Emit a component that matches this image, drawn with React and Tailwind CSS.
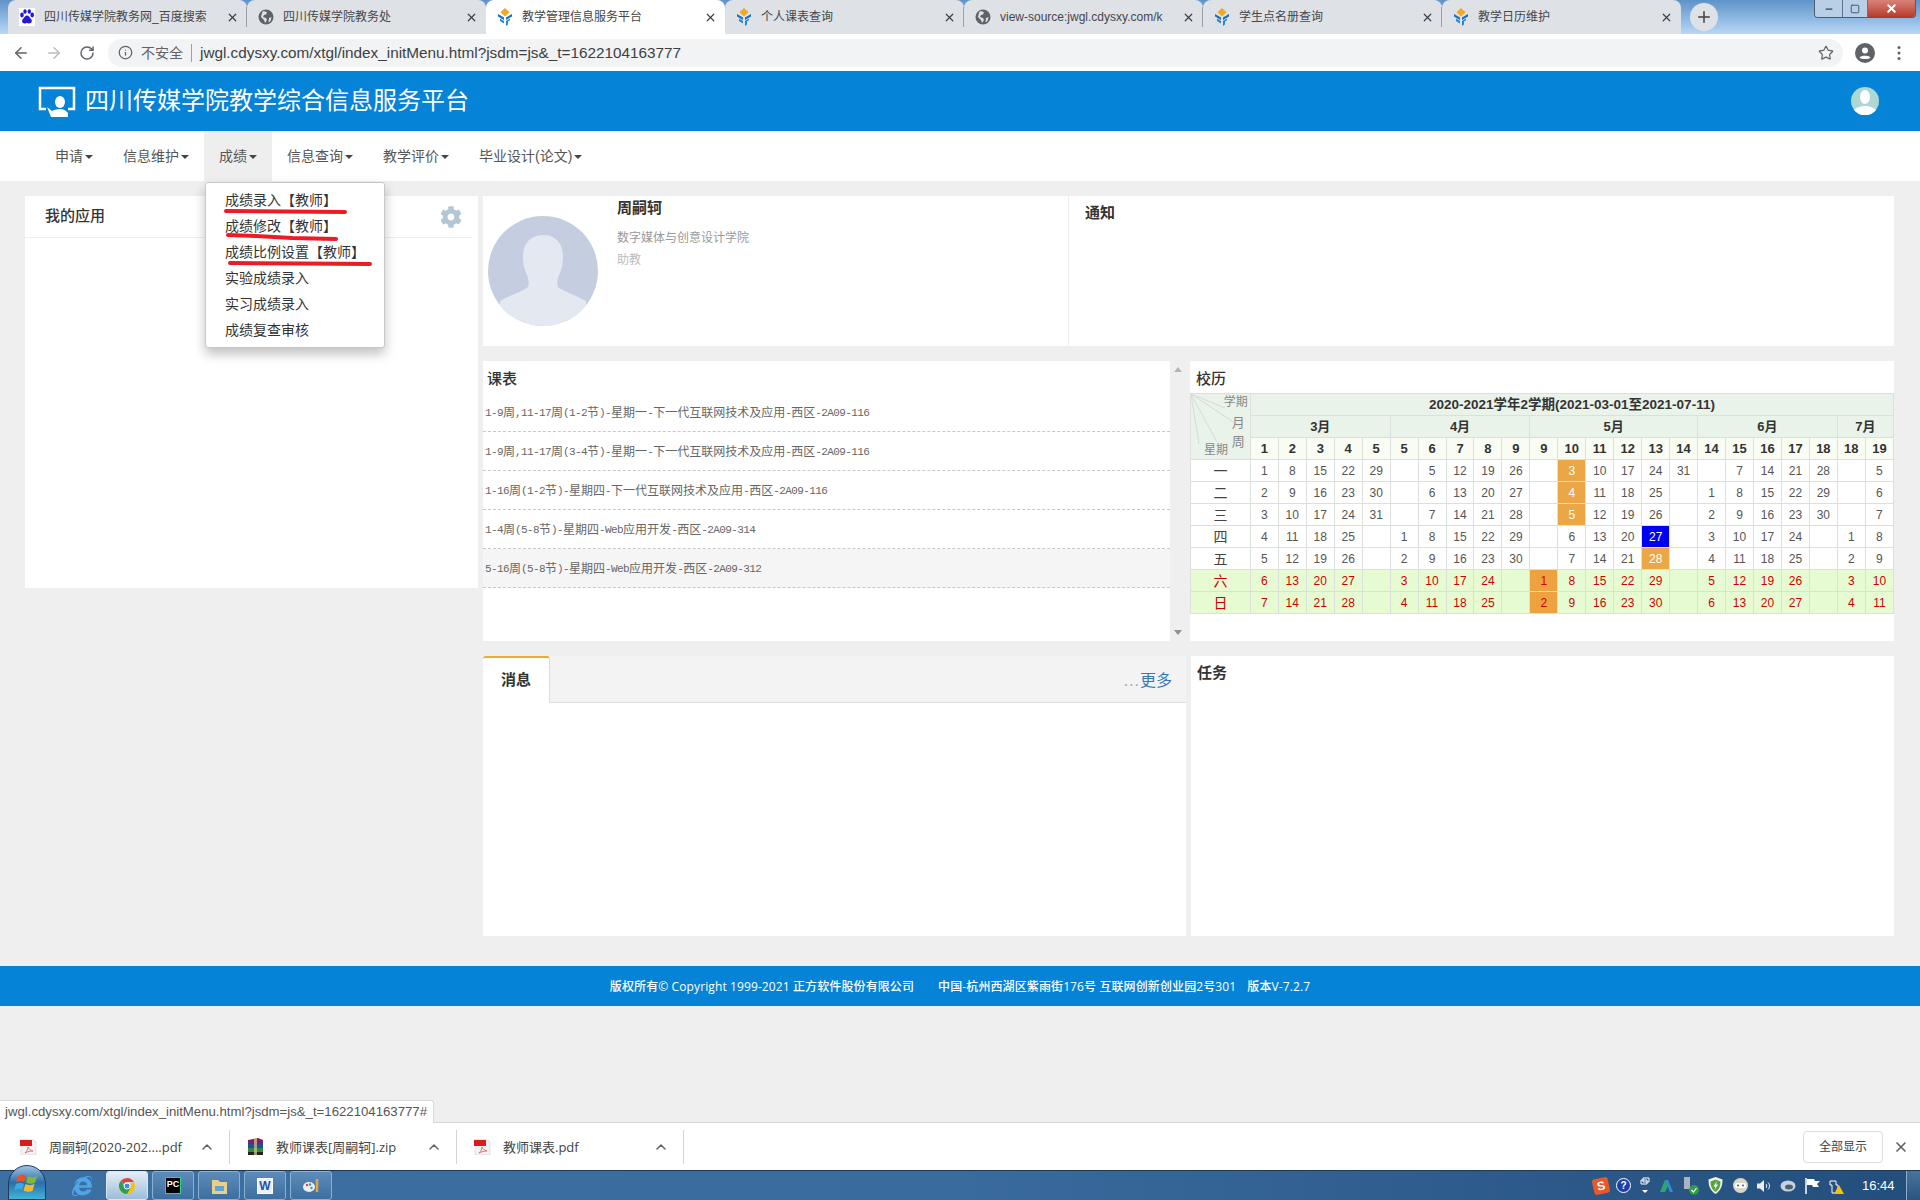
import React from 'react';
import { ArrowLeft, ArrowRight, RotateCw, Info, Star, ChevronUp, X, Plus, Minus, Square } from 'lucide-react';
import { FaCog, FaInternetExplorer } from 'react-icons/fa';

const tabs = [
    { title: '四川传媒学院教务网_百度搜索', icon: 'baidu' },
    { title: '四川传媒学院教务处', icon: 'globe' },
    { title: '教学管理信息服务平台', icon: 'logo', active: true },
    { title: '个人课表查询', icon: 'logo' },
    { title: 'view-source:jwgl.cdysxy.com/k', icon: 'globe' },
    { title: '学生点名册查询', icon: 'logo' },
    { title: '教学日历维护', icon: 'logo' },
];

const navItems = ['申请', '信息维护', '成绩', '信息查询', '教学评价', '毕业设计(论文)'];
const gradeMenu = ['成绩录入【教师】', '成绩修改【教师】', '成绩比例设置【教师】', '实验成绩录入', '实习成绩录入', '成绩复查审核'];

const courses = [
    '1-9周,11-17周(1-2节)-星期一-下一代互联网技术及应用-西区-2A09-116',
    '1-9周,11-17周(3-4节)-星期一-下一代互联网技术及应用-西区-2A09-116',
    '1-16周(1-2节)-星期四-下一代互联网技术及应用-西区-2A09-116',
    '1-4周(5-8节)-星期四-Web应用开发-西区-2A09-314',
    '5-16周(5-8节)-星期四-Web应用开发-西区-2A09-312',
];

const months = [['3月', 5], ['4月', 5], ['5月', 6], ['6月', 5], ['7月', 2]];
const weeks = [1, 2, 3, 4, 5, 5, 6, 7, 8, 9, 9, 10, 11, 12, 13, 14, 14, 15, 16, 17, 18, 18, 19];
const calendar = [
    ['一', [1, 8, 15, 22, 29, 0, 5, 12, 19, 26, 0, 3, 10, 17, 24, 31, 0, 7, 14, 21, 28, 0, 5]],
    ['二', [2, 9, 16, 23, 30, 0, 6, 13, 20, 27, 0, 4, 11, 18, 25, 0, 1, 8, 15, 22, 29, 0, 6]],
    ['三', [3, 10, 17, 24, 31, 0, 7, 14, 21, 28, 0, 5, 12, 19, 26, 0, 2, 9, 16, 23, 30, 0, 7]],
    ['四', [4, 11, 18, 25, 0, 1, 8, 15, 22, 29, 0, 6, 13, 20, 27, 0, 3, 10, 17, 24, 0, 1, 8]],
    ['五', [5, 12, 19, 26, 0, 2, 9, 16, 23, 30, 0, 7, 14, 21, 28, 0, 4, 11, 18, 25, 0, 2, 9]],
    ['六', [6, 13, 20, 27, 0, 3, 10, 17, 24, 0, 1, 8, 15, 22, 29, 0, 5, 12, 19, 26, 0, 3, 10]],
    ['日', [7, 14, 21, 28, 0, 4, 11, 18, 25, 0, 2, 9, 16, 23, 30, 0, 6, 13, 20, 27, 0, 4, 11]],
];

function LogoIcon() {
    return (
        <svg width="16" height="18" viewBox="0 0 16 18">
            <path d="M8 0l4.500 4.200L8 8.400 3.500 4.200z" fill="#f4a81d" />
            <path d="M1 6l6 3.500v2.500L1 8.500zM15 6L9 9.500v2.500l6-3.500z" fill="#1d6fb8" />
            <path d="M3 10.500l4 2.500v2.500l-4-2.500zM13 10.500L9 13v5l2-1.500v-3l2-1.200z" fill="#2a86cc" />
        </svg>
    );
}

function GlobeIcon() {
    return (
        <svg width="16" height="16" viewBox="0 0 16 16">
            <circle cx="8" cy="8" r="7.500" fill="#5f6368" />
            <path d="M5 2l4 1-1 2.500-2 .5-1 2 3 1 1 2-2 3-1-3-3-3 1-4zM11 9l2.500-1-1 4-2 1.500z" fill="#dee1e6" />
        </svg>
    );
}

function BaiduIcon() {
    return (
        <svg width="16" height="18" viewBox="0 0 16 18">
            <rect width="16" height="18" fill="#fff" />
            <g fill="#2319dc">
                <ellipse cx="3" cy="7" rx="1.800" ry="2.400" />
                <ellipse cx="6" cy="3.500" rx="1.700" ry="2.300" />
                <ellipse cx="10.300" cy="3.500" rx="1.700" ry="2.300" />
                <ellipse cx="13.200" cy="7" rx="1.800" ry="2.400" />
                <path d="M8 7.500c2 0 2.500 2 4 3.500s1 4.500-2 4.500c-1 0-1.300-.5-2-.5s-1.200.5-2.200.5c-3 0-3.300-3-1.800-4.500S6 7.500 8 7.500z" />
            </g>
        </svg>
    );
}

function TabIcon({ type }) {
    if (type === 'baidu') return <BaiduIcon />;
    if (type === 'globe') return <GlobeIcon />;
    return <LogoIcon />;
}

function TabStrip() {
    return (
        <div className="relative flex h-[34px] shrink-0 bg-gradient-to-b from-[#5e93c9] to-[#b8d8f6] pl-2">
            {tabs.map((tab, i) => (
                <div
                    key={tab.title}
                    className={`relative flex h-[34px] w-[239px] items-center rounded-t-lg pl-[11px] pr-[8px] text-xs ${tab.active ? 'bg-white' : 'bg-[#dee1e6]'}`}
                >
                    <span className="flex w-[25px] shrink-0"><TabIcon type={tab.icon} /></span>
                    <span className="min-w-0 flex-1 overflow-hidden whitespace-nowrap text-[#45474a]">{tab.title}</span>
                    <X size={13} strokeWidth={2.2} className="ml-1 shrink-0 text-[#3c4043]" />
                    {!tab.active && i !== 1 && i < 6 && <span className="absolute right-0 top-[7px] h-5 w-px bg-[#9aa0a6]" />}
                </div>
            ))}
            <div className="ml-[9px] mt-[3px] flex h-7 w-7 items-center justify-center rounded-full bg-[#dee1e6]">
                <Plus size={18} strokeWidth={2} className="text-[#3c4043]" />
            </div>
            <div className="absolute right-1 top-0 flex h-[18px] w-[102px] overflow-hidden rounded-b-[4px] border border-t-0 border-[#4b5e75]">
                <div className="flex w-[27px] items-center justify-center bg-[#b9cfe6]"><Minus size={10} strokeWidth={3} className="text-[#33465c]" /></div>
                <div className="flex w-[25px] items-center justify-center border-l border-[#5d7590] bg-[#b9cfe6]"><Square size={10} strokeWidth={2} className="text-[#33465c]" /></div>
                <div className="flex flex-1 items-center justify-center border-l border-[#5d7590] bg-gradient-to-b from-[#d98277] to-[#b53a2d]"><X size={13} strokeWidth={3.5} className="text-white" /></div>
            </div>
        </div>
    );
}

function Toolbar() {
    return (
        <div className="flex h-[37px] shrink-0 items-center bg-white">
            <div className="flex w-[108px] shrink-0 items-center pl-[12px]">
                <ArrowLeft size={18} strokeWidth={2} className="text-[#5f6368]" />
                <ArrowRight size={18} strokeWidth={2} className="ml-[15px] text-[#b9bcc0]" />
                <RotateCw size={16} strokeWidth={2.2} className="ml-[16px] text-[#5f6368]" />
            </div>
            <div className="flex h-[28px] flex-1 items-center rounded-full bg-[#f1f3f4] pl-[10px] text-sm">
                <Info size={15} strokeWidth={2} className="text-[#5f6368]" />
                <span className="ml-2 text-[#5f6368]">不安全</span>
                <span className="mx-2 h-[18px] w-px bg-[#9aa0a6]" />
                <span className="whitespace-nowrap text-[15.300px] text-[#3c4043]">jwgl.cdysxy.com/xtgl/index_initMenu.html?jsdm=js&amp;_t=1622104163777</span>
                <Star size={16} strokeWidth={1.8} className="ml-auto mr-[9px] text-[#5f6368]" />
            </div>
            <div className="flex w-[77px] shrink-0 items-center pl-3">
                <svg width="20" height="20" viewBox="0 0 20 20">
                    <circle cx="10" cy="10" r="10" fill="#5f6368" />
                    <circle cx="10" cy="7.500" r="3" fill="#fff" />
                    <path d="M4.500 14.500c1.500-2.500 9.500-2.500 11 0-1.500 2-9.500 2-11 0z" fill="#fff" />
                </svg>
                <svg width="4" height="16" viewBox="0 0 4 16" className="ml-[22px]">
                    <circle cx="2" cy="2.500" r="1.500" fill="#5f6368" />
                    <circle cx="2" cy="8" r="1.500" fill="#5f6368" />
                    <circle cx="2" cy="13.500" r="1.500" fill="#5f6368" />
                </svg>
            </div>
        </div>
    );
}

function SiteHeader() {
    return (
        <div className="flex h-[60px] shrink-0 items-center bg-[#0583d6] pl-[38px] pr-[41px] text-white">
            <svg width="38" height="31" viewBox="0 0 38 31" fill="none">
                <path d="M8 23H2V2h34v21h-6" stroke="#fff" strokeWidth="2.500" />
                <ellipse cx="22" cy="16" rx="5" ry="6" fill="#fff" />
                <path d="M9 21l5 4c2-1 4-2 8-2s6 2 8 4v4H13z" fill="#fff" />
            </svg>
            <span className="ml-[9px] text-2xl leading-none">四川传媒学院教学综合信息服务平台</span>
            <svg width="28" height="28" viewBox="0 0 28 28" className="ml-auto">
                <circle cx="14" cy="14" r="14" fill="#add8d2" />
                <ellipse cx="14" cy="10" rx="5" ry="7" fill="#fff" />
                <path d="M3 23c3-3 7-4 11-4s8 1 11 4a14 14 0 0 1-22 0z" fill="#fff" />
            </svg>
        </div>
    );
}

function Caret() {
    return <span className="ml-[2px] mt-[2px] inline-block border-x-4 border-t-4 border-x-transparent border-t-[#444]" />;
}

function GradeDropdown() {
    return (
        <div className="absolute left-px top-[51px] z-10 w-[180px] rounded-[3px] border border-[#c8c8c8] bg-white py-[4px] shadow-[0_6px_12px_rgba(0,0,0,0.25)]">
            {gradeMenu.map(item => (
                <div key={item} className="flex h-[26px] items-center whitespace-nowrap pl-[19px] text-sm text-[#333]">{item}</div>
            ))}
            {/* Red marker strokes drawn over the first three entries */}
            <svg width="180" height="90" viewBox="0 0 180 90" fill="none" className="absolute left-0 top-0">
                <path d="M20 28L80 28.500L139 29" stroke="#ed1c24" strokeWidth="4" strokeLinecap="round" />
                <path d="M22 52L50 53L86 55L130 56" stroke="#ed1c24" strokeWidth="4" strokeLinecap="round" />
                <path d="M24 80L96 80.500L164 81" stroke="#ed1c24" strokeWidth="4" strokeLinecap="round" />
            </svg>
        </div>
    );
}

function NavBar() {
    return (
        <div className="flex h-[50px] shrink-0 bg-white pl-10">
            {navItems.map(item => (
                <div key={item} className={`relative flex items-center px-[15px] text-sm text-[#555] ${item === '成绩' ? 'bg-[#eeeeee]' : ''}`}>
                    {item}
                    <Caret />
                    {item === '成绩' && <GradeDropdown />}
                </div>
            ))}
        </div>
    );
}

function AppsPanel() {
    return (
        <div className="h-[392px] w-[453px] shrink-0 bg-white">
            <div className="mr-[6px] flex h-[42px] items-center justify-between border-b border-[#eeeeee] pl-5 pr-[10px]">
                <span className="text-[15px] font-medium text-[#333]">我的应用</span>
                <FaCog size={22} className="text-[#b3c6d3]" />
            </div>
        </div>
    );
}

function ProfilePanel() {
    return (
        <div className="flex h-[150px] bg-white">
            <div className="flex w-[585px] shrink-0">
                <svg width="110" height="110" viewBox="0 0 110 110" className="ml-[5px] mt-5 shrink-0">
                    <clipPath id="avatarClip"><circle cx="55" cy="55" r="55" /></clipPath>
                    <circle cx="55" cy="55" r="55" fill="#c4cee0" />
                    <g clipPath="url(#avatarClip)" fill="#e3e8f1">
                        <path d="M35 40c0-14 9-21 20-21s20 7 20 21c0 10-2 15-4 19-2 5-2 9-1 12 6 5 18 8 28 14v25H12V85c10-6 22-9 28-14 1-3 1-7-1-12-2-4-4-9-4-19z" />
                    </g>
                </svg>
                <div className="ml-[19px] flex flex-col items-start">
                    <div className="mt-[2px] text-[15px] font-bold leading-5 text-[#333]">周嗣轲</div>
                    <div className="mt-[12px] text-xs leading-4 text-[#999]">数字媒体与创意设计学院</div>
                    <div className="mt-[6px] text-xs leading-4 text-[#bbb]">助教</div>
                </div>
            </div>
            <div className="flex-1 border-l border-[#eeeeee] pl-4 pt-[7px] text-[15px] font-bold leading-5 text-[#333]">通知</div>
        </div>
    );
}

// 宋体-like line: latin runs are squeezed to half an em so the mono widths match
function CourseText({ text }) {
    const runs = text.match(/[\x00-\x7f]+|[^\x00-\x7f]+/g);
    return runs.map((run, i) =>
        /^[\x00-\x7f]/.test(run)
            ? <span key={i} className="font-['Liberation_Mono',monospace] text-[11px] tracking-[-0.6px]">{run}</span>
            : <span key={i}>{run}</span>
    );
}

function CoursePanel() {
    return (
        <div className="flex w-[703px] shrink-0">
            <div className="w-[687px] shrink-0 bg-white">
                <div className="h-[32px] pl-[4px] pt-[6px] text-[15px] font-medium leading-6 text-[#333]">课表</div>
                {courses.map((course, i) => (
                    <div
                        key={course}
                        className={`flex h-[39px] items-center whitespace-pre border-b border-dashed border-[#c8c8c8] pl-[2px] pt-[2px] text-xs text-[#666] ${i === 4 ? 'bg-[#f5f5f5]' : ''}`}
                    >
                        <CourseText text={course} />
                    </div>
                ))}
            </div>
            <div className="flex w-4 flex-col items-center justify-between py-[6px]">
                <span className="border-x-[4px] border-b-[5px] border-x-transparent border-b-[#b5b5b5]" />
                <span className="border-x-[4px] border-t-[5px] border-x-transparent border-t-[#909090]" />
            </div>
        </div>
    );
}

const thCell = 'border border-[#dcdfdc] bg-[#e9f3ea] text-center font-bold text-[#333]';

function CalendarPanel() {
    return (
        <div className="ml-[4px] flex-1 bg-white">
            <div className="h-8 pl-[6px] pt-[6px] text-[15px] font-medium leading-6 text-[#333]">校历</div>
            <table className="table-fixed border-collapse text-xs text-[#555]">
                <colgroup>
                    <col className="w-[60px]" />
                    {weeks.map((w, i) => <col key={i} className="w-[28px]" />)}
                </colgroup>
                <tbody>
                    <tr className="h-[22px]">
                        <td rowSpan={3} className="relative border border-[#dcdfdc] bg-[#e9f3ea] p-0 text-[#888]">
                            <svg width="60" height="66" viewBox="0 0 60 66" className="absolute left-0 top-0" fill="none" stroke="#d4dcd4">
                                <path d="M0 0l34 14M0 0l50 33M0 0l26 48M0 0l8 50" />
                            </svg>
                            <span className="absolute right-[2px] top-0">学期</span>
                            <span className="absolute right-[5px] top-[20px] text-[13px]">月</span>
                            <span className="absolute right-[5px] top-[39px] text-[13px]">周</span>
                            <span className="absolute left-[13px] top-[48px]">星期</span>
                        </td>
                        <td colSpan={23} className={`${thCell} text-[13.500px]`}>2020-2021学年2学期(2021-03-01至2021-07-11)</td>
                    </tr>
                    <tr className="h-[22px]">
                        {months.map(([name, span]) => (
                            <td key={name} colSpan={span} className={`${thCell} text-[13px]`}>{name}</td>
                        ))}
                    </tr>
                    <tr className="h-[22px]">
                        {weeks.map((w, i) => (
                            <td key={i} className="border border-[#dcdfdc] bg-[#f8fcf3] text-center text-[13px] font-bold text-[#333]">{w}</td>
                        ))}
                    </tr>
                    {calendar.map(([day, dates], r) => {
                        const weekend = r >= 5;
                        return (
                            <tr key={day} className={`h-[22px] ${weekend ? 'bg-[#e6fbd2] text-[#d40000]' : ''}`}>
                                <td className={`border border-[#dcdfdc] text-center text-sm ${weekend ? 'text-[#d40000]' : 'text-[#444]'}`}>{day}</td>
                                {dates.map((d, c) => {
                                    let tone = '';
                                    if (weekend && c === 10) tone = 'bg-[#eea23f]';
                                    if ((c === 11 && r <= 2) || (c === 14 && r === 4)) tone = 'bg-[#eba746] text-white';
                                    if (c === 14 && r === 3) tone = 'bg-[#0000ee] text-white';
                                    return (
                                        <td key={c} className={`border border-[#dcdfdc] p-0 text-center ${tone}`}>{d || ''}</td>
                                    );
                                })}
                            </tr>
                        );
                    })}
                </tbody>
            </table>
        </div>
    );
}

function MessagePanel() {
    return (
        <div className="h-[280px] w-[703px] shrink-0 bg-white">
            <div className="flex h-[47px] items-stretch justify-between border-b border-[#dddddd] bg-[#f3f3f3]">
                <div className="mb-[-1px] flex w-[67px] items-center justify-center rounded-t-[3px] border-r border-t-2 border-r-[#dddddd] border-t-[#e8ad33] bg-white text-[15px] font-bold text-[#333]">消息</div>
                <div className="flex items-center pr-[14px] pt-[4px] text-base text-[#337ab7]"><span className="text-base tracking-[1px] text-[#8aa9c4]">...</span>更多</div>
            </div>
        </div>
    );
}

function TaskPanel() {
    return <div className="ml-[5px] h-[280px] flex-1 bg-white pl-[6px] pt-[7px] text-[15px] font-bold leading-5 text-[#333]">任务</div>;
}

function PdfIcon() {
    return (
        <svg width="17" height="16" viewBox="0 0 17 16">
            <path d="M1 0h11l4 3v13H1z" fill="#f3f3f3" stroke="#c9c9c9" strokeWidth="0.500" />
            <rect x="0" y="1" width="12" height="6" fill="#d3201f" />
            <path d="M5 14c2-2 3-4 3-6 1 2 2 3 5 4-3 0-5 .5-8 2z" fill="none" stroke="#e0574f" strokeWidth="0.800" />
        </svg>
    );
}

function ZipIcon() {
    return (
        <svg width="17" height="17" viewBox="0 0 17 17">
            <path d="M1 2l10-2 5 2v4H1z" fill="#7d1f6b" />
            <rect x="1" y="6" width="15" height="4" fill="#1c4f9c" />
            <rect x="1" y="10" width="15" height="3.500" fill="#2b8a3e" />
            <rect x="1" y="13.500" width="15" height="3.500" fill="#222" />
            <path d="M7 0h3v17H7z" fill="#d8c98a" opacity="0.700" />
        </svg>
    );
}

function DownloadItem({ icon, name, width }) {
    return (
        <div className={`flex items-center ${width}`}>
            {icon}
            <span className="ml-3 whitespace-nowrap pt-[3px] font-['Open_Sans','Noto_Sans_CJK_SC',sans-serif] text-[13px] text-[#444]">{name}</span>
            <ChevronUp size={16} strokeWidth={2.2} className="ml-auto mr-[14px] text-[#5f6368]" />
            <span className="h-[34px] w-px bg-[#d5d5d5]" />
        </div>
    );
}

function DownloadBar() {
    return (
        <div className="relative flex h-[48px] shrink-0 border-t border-[#d8d8d8] bg-white">
            <div className="absolute bottom-full left-0 flex h-[23px] items-center rounded-tr-[3px] border-r border-t border-[#d8d8d8] bg-white pl-[5px] pr-[6px] text-[13.200px] text-[#555]">
                jwgl.cdysxy.com/xtgl/index_initMenu.html?jsdm=js&amp;_t=1622104163777#
            </div>
            <DownloadItem icon={<PdfIcon />} name="周嗣轲(2020-202....pdf" width="w-[230px] pl-5" />
            <DownloadItem icon={<ZipIcon />} name="教师课表[周嗣轲].zip" width="w-[227px] pl-[17px]" />
            <DownloadItem icon={<PdfIcon />} name="教师课表.pdf" width="w-[227px] pl-[17px]" />
            <div className="ml-auto mr-[11px] flex items-center">
                <div className="flex h-8 w-20 items-center justify-center rounded border border-[#dadce0] text-xs text-[#3c4043]">全部显示</div>
                <X size={16} strokeWidth={2.5} className="ml-[10px] text-[#5f6368]" />
            </div>
        </div>
    );
}

function TaskButton({ active, children }) {
    return (
        <div className={`flex h-[29px] w-[42px] items-center justify-center rounded-[3px] border ${active ? 'border-[#d9e6f2] bg-gradient-to-b from-[#e6eef6] to-[#9dbcd8]' : 'border-[#8cb0cf] bg-gradient-to-b from-[#5d8cb9] to-[#3c6f9f]'}`}>
            {children}
        </div>
    );
}

function ChromeIcon() {
    return (
        <svg width="16" height="16" viewBox="0 0 16 16">
            <path d="M8 0a8 8 0 0 1 6.900 4H8a4 4 0 0 0-3.600 2.200L2.100 2.600A8 8 0 0 1 8 0z" fill="#db4437" />
            <path d="M14.900 4A8 8 0 0 1 8 16l3.400-6A4 4 0 0 0 11.400 5.500z" fill="#f4c20d" />
            <path d="M8 16A8 8 0 0 1 2.100 2.600l3.300 5.800A4 4 0 0 0 11.400 10z" fill="#2f9e44" />
            <circle cx="8" cy="8" r="3" fill="#4285f4" stroke="#fff" />
        </svg>
    );
}

function StartOrb() {
    return (
        <div className="absolute bottom-0 left-2 h-[35px] w-[38px] overflow-hidden rounded-t-full border border-[#1c3c5c] bg-gradient-to-b from-[#9cc4e4] via-[#2c6ea8] to-[#3fb5d8]">
            <svg width="36" height="34" viewBox="0 0 36 34">
                <path d="M9 10c3-2 6-2 8 0l-2 6c-2-1.500-5-1.500-8 0z" fill="#e5532d" />
                <path d="M19 10c3 1.500 6 1.500 9 0l-2 7c-3 1-6 1-9-.5z" fill="#7eb83d" />
                <path d="M7 18c3-1.500 6-1.500 8 0l-2 6c-2-1.500-5-1.500-8 0z" fill="#3fa7e0" />
                <path d="M16.500 18c3 1.500 6 1.500 9 0l-2 7c-3 1-6 1-9-.5z" fill="#f4b72c" />
            </svg>
        </div>
    );
}

function Tray() {
    return (
        <div className="ml-auto flex h-full items-center">
            <div className="flex h-4 w-4 -rotate-12 items-center justify-center rounded-[3px] bg-[#e8592a] text-xs font-bold text-white">S</div>
            <div className="ml-[7px] flex h-[15px] w-[15px] items-center justify-center rounded-full border border-white bg-[#1c3fa8] text-[10px] font-bold text-white">?</div>
            <svg width="10" height="18" viewBox="0 0 10 18" className="ml-[9px]" fill="none">
                <path d="M3 1h6v4H3zM1 3h6v4H1z" stroke="#fff" />
                <path d="M2 13h6l-3 3z" fill="#fff" />
            </svg>
            <svg width="13" height="12" viewBox="0 0 13 12" className="ml-[10px]">
                <path d="M5 0h3l5 12h-3z" fill="#2f8fd8" />
                <path d="M5 0l3 6-3 6H0z" fill="#2fa66a" />
            </svg>
            <svg width="16" height="18" viewBox="0 0 16 18" className="ml-[10px]">
                <rect x="1" y="0" width="6" height="12" fill="#a9b4bf" />
                <circle cx="11" cy="13" r="5" fill="#2f9e44" />
                <path d="M8.500 13l2 2 3-4" stroke="#fff" strokeWidth="1.200" fill="none" />
            </svg>
            <svg width="15" height="17" viewBox="0 0 15 17" className="ml-[9px]">
                <path d="M7.500 0l7 2.500c0 7-2 11-7 14.500C2.500 13.500.500 9.500.500 2.500z" fill="#f1f4e8" />
                <path d="M7.500 2.500l5 2c0 5-1.500 8-5 10.500-3.500-2.500-5-5.500-5-10.500z" fill="#57a53a" />
                <path d="M9 4L5.500 9.500h2L6.500 13 10 7.500H8z" fill="#fff" />
            </svg>
            <svg width="15" height="15" viewBox="0 0 15 15" className="ml-[10px]">
                <circle cx="7.500" cy="7.500" r="7.500" fill="#d9d6c4" />
                <rect x="2" y="5" width="11" height="5" rx="2" fill="#fff" />
                <circle cx="5" cy="7.500" r="1" fill="#555" />
                <circle cx="10" cy="7.500" r="1" fill="#555" />
            </svg>
            <svg width="15" height="14" viewBox="0 0 15 14" className="ml-[9px]" fill="none">
                <path d="M0 4.500h3L7 1v12L3 9.500H0z" fill="#e8eef4" />
                <path d="M9 5c1 1 1 3 0 4M11 3.500c2 2 2 5 0 7" stroke="#e8eef4" />
            </svg>
            <svg width="16" height="12" viewBox="0 0 16 12" className="ml-[8px]" fill="none">
                <ellipse cx="8" cy="6" rx="7.500" ry="5.500" fill="#c8d2db" />
                <ellipse cx="9" cy="7" rx="4" ry="2.500" fill="#4a6075" />
            </svg>
            <svg width="15" height="16" viewBox="0 0 15 16" className="ml-[9px]">
                <path d="M1 0v16" stroke="#fff" strokeWidth="1.500" />
                <path d="M2 1h7l1 2h5l-3 3 2 3H8L7 7H2z" fill="#fff" />
            </svg>
            <svg width="16" height="17" viewBox="0 0 16 17" className="ml-[9px]">
                <path d="M1 4h6v4h2v8H3V8h-2z" fill="none" stroke="#fff" />
                <path d="M10 8l5 9H5z" fill="#f4c20d" />
            </svg>
            <span className="ml-[17px] w-[44px] text-[13px] text-white">16:44</span>
            <div className="h-full w-[14px] border-l border-[#8fb0cc] bg-gradient-to-b from-[#47739d] to-[#2b5580]" />
        </div>
    );
}

function Taskbar() {
    return (
        <div className="relative flex h-[30px] shrink-0 items-center border-t border-[#1d3a59] bg-gradient-to-r from-[#3c6fa2] via-[#3a6b9e] to-[#234e7c] pl-[72px]">
            <StartOrb />
            <FaInternetExplorer size={20} className="text-[#4da6e6]" />
            <div className="ml-[14px] flex gap-1">
                <TaskButton active><ChromeIcon /></TaskButton>
                <TaskButton><span className="flex h-[17px] w-[16px] items-start justify-center border border-[#21d789] bg-black text-[9px] font-bold leading-3 text-white">PC</span></TaskButton>
                <TaskButton>
                    <svg width="17" height="16" viewBox="0 0 17 16">
                        <path d="M1 2h6l2 2h7v12H1z" fill="#e8cf8a" />
                        <rect x="4" y="8" width="9" height="5" fill="#5aa8d8" />
                    </svg>
                </TaskButton>
                <TaskButton><span className="flex h-[16px] w-[16px] items-center justify-center border border-white bg-[#e9f0fa] text-xs font-bold text-[#1f4fa3]">W</span></TaskButton>
                <TaskButton>
                    <svg width="17" height="16" viewBox="0 0 17 16">
                        <ellipse cx="6" cy="9" rx="6" ry="5" fill="#e8eef4" />
                        <circle cx="4" cy="7" r="1.200" fill="#d84a3a" />
                        <circle cx="7" cy="6.500" r="1.200" fill="#3a8ad8" />
                        <circle cx="8.500" cy="10" r="1.200" fill="#3fa34d" />
                        <path d="M14 1v13" stroke="#e8a33d" strokeWidth="2.500" />
                    </svg>
                </TaskButton>
            </div>
            <Tray />
        </div>
    );
}

function Footer() {
    return (
        <div className="flex h-10 items-center justify-center bg-[#0583d6] pt-[2px] font-['Open_Sans','Noto_Sans_CJK_SC',sans-serif] text-xs font-medium tracking-[0.110px] text-white">
            <span>版权所有© Copyright 1999-2021 正方软件股份有限公司</span>
            <span className="ml-6">中国-杭州西湖区紫雨街176号 互联网创新创业园2号301</span>
            <span className="ml-[11px]">版本V-7.2.7</span>
        </div>
    );
}

export default function App() {
    return (
        <div className="flex h-[1200px] w-[1920px] flex-col overflow-hidden bg-[#efefef] font-['Liberation_Sans','Noto_Sans_CJK_SC',sans-serif]">
            <TabStrip />
            <Toolbar />
            <SiteHeader />
            <NavBar />
            <main className="flex-1">
                <div className="flex gap-[5px] pl-[25px] pr-[26px] pt-[15px]">
                    <AppsPanel />
                    <div className="flex flex-1 flex-col gap-[15px]">
                        <ProfilePanel />
                        <div className="flex h-[280px]">
                            <CoursePanel />
                            <CalendarPanel />
                        </div>
                        <div className="flex">
                            <MessagePanel />
                            <TaskPanel />
                        </div>
                    </div>
                </div>
                <div className="mt-[30px]"><Footer /></div>
            </main>
            <DownloadBar />
            <Taskbar />
        </div>
    );
}
